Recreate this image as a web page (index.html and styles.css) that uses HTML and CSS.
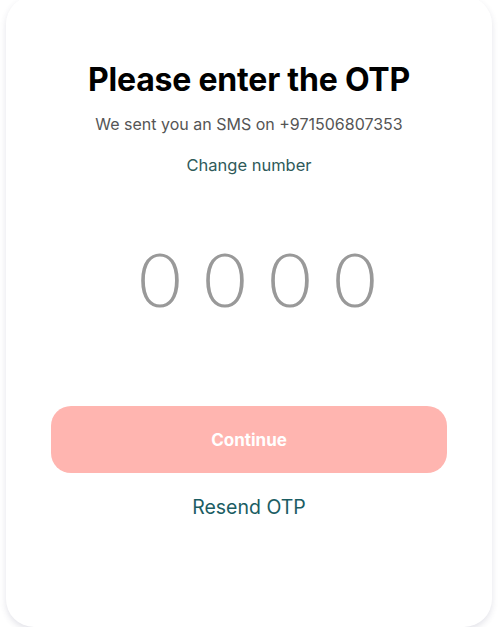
FILE: index.html
```html
<!DOCTYPE html>
<html lang="en">
<head>
  <meta charset="UTF-8" />
  <meta name="viewport" content="width=device-width, initial-scale=1.0" />
  <title>Verify OTP</title>
  <link rel="stylesheet" href="styles.css">
</head>
<body>

<main class="card">
  <h1>Please enter the OTP</h1>
  <p class="sent">We sent you an SMS on +971506807353</p>
  <a class="change" href="#">Change number</a>

  <div class="otp">
    <input type="text" maxlength="1" placeholder="0" />
    <input type="text" maxlength="1" placeholder="0" />
    <input type="text" maxlength="1" placeholder="0" />
    <input type="text" maxlength="1" placeholder="0" />
  </div>

  <button class="continue" disabled>Continue</button>
  <a class="resend" href="#">Resend OTP</a>
</main>

</body>
</html>
```

FILE: styles.css
```css
body {
  font-family: 'Inter', 'Liberation Sans', sans-serif;
  margin: 0;
  padding: 0 6px;
  background-color: #ffffff;
  color: #333;
}

.card {
  height: 631px;
  margin-top: -4px;
  box-sizing: border-box;
  background: #ffffff;
  border-radius: 28px;
  box-shadow: 0 3px 6px rgba(60, 60, 100, 0.14);
  padding: 64px 45px 0;
  display: flex;
  flex-direction: column;
  align-items: center;
  text-align: center;
}

h1 {
  margin: 0;
  font-size: 32px;
  font-weight: 700;
  color: #000;
  line-height: 40px;
  letter-spacing: -0.2px;
}

.sent {
  margin: 14px 0 0;
  font-size: 16px;
  color: #555;
}

.change {
  margin-top: 21px;
  font-size: 16.5px;
  color: #2f5a5a;
  text-decoration: none;
}

.otp {
  display: flex;
  gap: 25px;
  margin: 59px 0 0 14px;
}

.otp input {
  width: 40px;
  border: none;
  outline: none;
  padding: 0;
  font-family: 'Lato', sans-serif;
  font-size: 74px;
  font-weight: 300;
  text-align: center;
  color: #333;
  background: transparent;
}

.otp input::placeholder {
  color: #999;
}

.continue {
  margin-top: 83px;
  width: 100%;
  height: 67px;
  border: none;
  border-radius: 20px;
  background-color: #ffb5b0;
  color: #fff;
  font-family: inherit;
  font-size: 17px;
  font-weight: 700;
}

.resend {
  margin-top: 22px;
  font-size: 19.5px;
  color: #1b5d63;
  text-decoration: none;
}
```
